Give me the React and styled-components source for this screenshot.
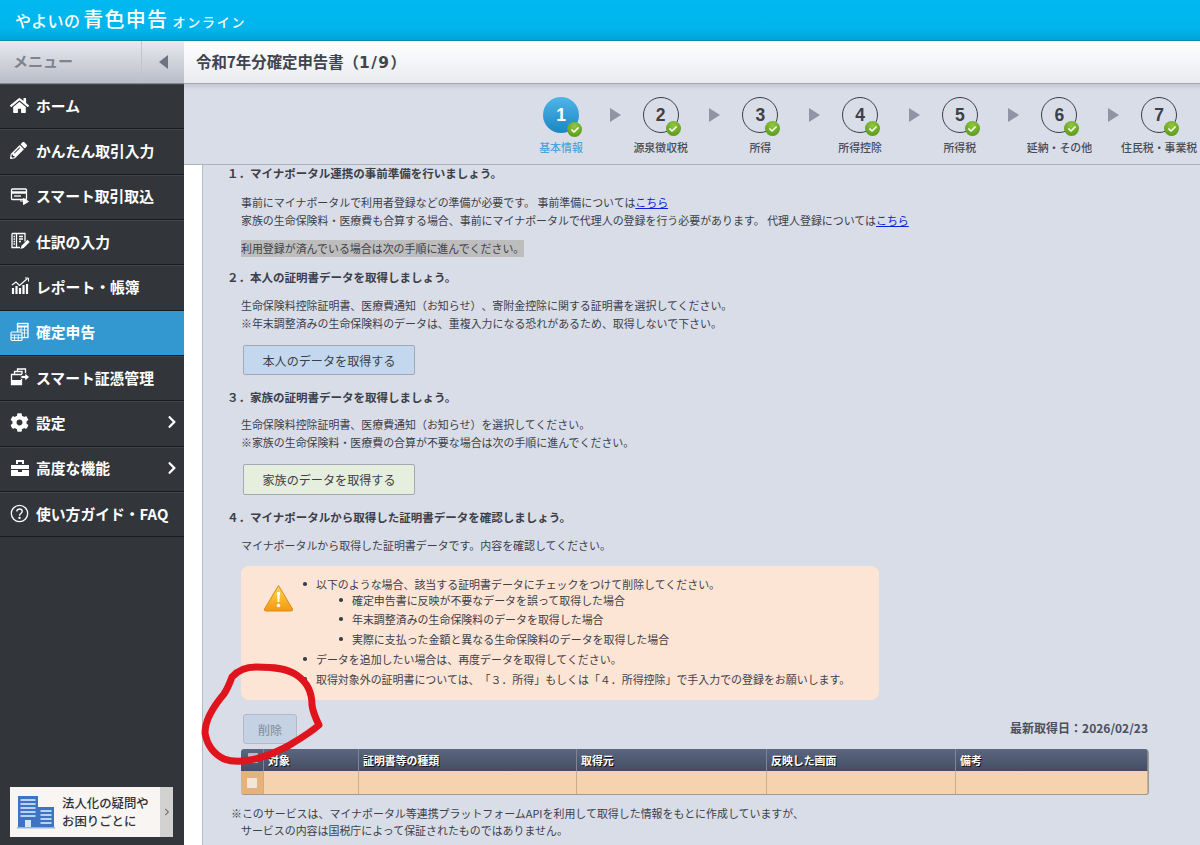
import React from 'react';
import styled, { createGlobalStyle } from 'styled-components';
import { FaHome, FaPencilAlt, FaCog, FaChevronRight, FaCheck } from 'react-icons/fa';

const GlobalStyle = createGlobalStyle`
  html, body {
    margin: 0;
    padding: 0;
    background: #fff;
  }
  body {
    font-family: "Noto Sans CJK JP", "Noto Sans", sans-serif;
    color: #3c4048;
    text-spacing-trim: space-all;
  }
`;

const Page = styled.div`
  position: relative;
  width: 1200px;
  height: 845px;
  overflow: hidden;
  display: flex;
  flex-direction: column;
`;

const Header = styled.header`
  height: 41px;
  flex: none;
  display: flex;
  align-items: baseline;
  padding: 3px 0 0 15px;
  box-sizing: border-box;
  color: #fff;
  background: linear-gradient(#00b9f0, #00b5ec 70%, #00a5d8);
  border-bottom: 1px solid #0a88ad;
`;

const LogoPart = styled.span`
  font-size: ${(p) => p.$size}px;
  font-weight: 500;
  letter-spacing: ${(p) => p.$space}px;
  margin-right: ${(p) => p.$gap || 0}px;
  line-height: 32px;
`;

const Body = styled.div`
  flex: 1;
  display: flex;
  min-height: 0;
`;

const Sidebar = styled.aside`
  width: 184px;
  flex: none;
  display: flex;
  flex-direction: column;
  background: #32363b;
`;

const MenuHead = styled.div`
  height: 43px;
  flex: none;
  display: flex;
  background: linear-gradient(#e8e9ee, #b9bdc9);
  border-bottom: 1px solid #85888e;
  box-sizing: border-box;
`;

const MenuTitle = styled.div`
  flex: 1;
  padding-left: 13px;
  line-height: 40px;
  font-size: 15px;
  font-weight: 700;
  color: #80838c;
  border-right: 1px solid #c2c5cf;
`;

const MenuToggle = styled.div`
  width: 42px;
  display: flex;
  align-items: center;
  justify-content: center;
  &::after {
    content: '';
    border-right: 9px solid #6d7380;
    border-top: 7px solid transparent;
    border-bottom: 7px solid transparent;
  }
`;

const MenuItem = styled.div`
  height: 45.33px;
  flex: none;
  box-sizing: border-box;
  display: flex;
  align-items: center;
  padding: 0 5px 2px 10px;
  color: #fff;
  font-size: 14.8px;
  font-weight: 700;
  background: ${(p) => (p.$active ? '#3398cf' : '#32363b')};
  border-bottom: 1px solid #191b1e;
  box-shadow: inset 0 1px 0 ${(p) => (p.$active ? '#3398cf' : '#42464b')};
`;

const MenuIcon = styled.span`
  width: 26px;
  flex: none;
  display: flex;
  align-items: center;
  svg {
    display: block;
  }
`;

const MenuLabel = styled.span`
  flex: 1;
  white-space: nowrap;
`;

const Banner = styled.div`
  margin: auto 11px 8px 10px;
  height: 50px;
  flex: none;
  display: flex;
  background: #f8f5f2;
  color: #2e3238;
`;

const BannerIcon = styled.div`
  width: 52px;
  flex: none;
  display: flex;
  align-items: center;
  justify-content: center;
`;

const BannerText = styled.div`
  flex: 1;
  font-size: 12.4px;
  font-weight: 500;
  line-height: 18px;
  padding-top: 7px;
  white-space: nowrap;
`;

const BannerArrow = styled.div`
  width: 13px;
  flex: none;
  background: #d2d2d0;
  color: #777;
  display: flex;
  align-items: center;
  justify-content: center;
`;

const Main = styled.main`
  flex: 1;
  min-width: 0;
  display: flex;
  flex-direction: column;
`;

const TitleBar = styled.div`
  height: 43px;
  flex: none;
  box-sizing: border-box;
  padding-left: 12px;
  line-height: 40px;
  font-size: 15.4px;
  font-weight: 700;
  color: #40444d;
  background: linear-gradient(#fff, #e9ebf0);
  border-bottom: 1px solid #a5a8b0;
`;

const TitleCount = styled.span`
  font-family: "DejaVu Sans", sans-serif;
  letter-spacing: 1.5px;
`;

const StepBar = styled.div`
  height: 81px;
  flex: none;
  box-sizing: border-box;
  display: flex;
  padding: 13px 0 0 337px;
  background: linear-gradient(#c5c8d0, #d9dde8 6px);
  border-bottom: 1px solid #adb1b9;
`;

const Step = styled.div`
  width: 80px;
  flex: none;
  display: flex;
  flex-direction: column;
  align-items: center;
`;

const Circle = styled.div`
  position: relative;
  width: 36px;
  height: 36px;
  box-sizing: border-box;
  border-radius: 50%;
  display: flex;
  align-items: center;
  justify-content: center;
  font-family: "Liberation Sans", sans-serif;
  font-size: 17.5px;
  font-weight: 700;
  color: ${(p) => (p.$current ? '#fff' : '#3c4048')};
  background: ${(p) => (p.$current ? 'linear-gradient(#4fb5e8, #1a86c4)' : 'transparent')};
  border: ${(p) => (p.$current ? 'none' : '1.5px solid #3a3e47')};
`;

const Done = styled.span`
  position: absolute;
  right: -3px;
  bottom: -4px;
  width: 15px;
  height: 15px;
  border-radius: 50%;
  display: flex;
  align-items: center;
  justify-content: center;
  color: #fff;
  background: radial-gradient(circle at 50% 30%, #92c83e, #4d8f14);
`;

const StepLabel = styled.div`
  margin-top: 7px;
  font-size: 10.9px;
  line-height: 14px;
  font-weight: 500;
  white-space: nowrap;
  color: ${(p) => (p.$current ? '#4ba3dc' : '#484c55')};
`;

const StepArrow = styled.div`
  width: 19.7px;
  flex: none;
  height: 36px;
  margin-right: -1px;
  display: flex;
  align-items: center;
  justify-content: flex-end;
  &::after {
    content: '';
    border-left: 11px solid #8f95a5;
    border-top: 7px solid transparent;
    border-bottom: 7px solid transparent;
  }
  & + div {
    margin-left: 1px;
  }
`;

const Gutter = styled.div`
  flex: 1;
  min-height: 0;
  padding-left: 18px;
  background: #fff;
  display: flex;
`;

const Panel = styled.div`
  flex: 1;
  min-width: 0;
  box-sizing: border-box;
  padding: 0 52px 0 24px;
  background: #d9dde8;
  border-left: 1px solid #b6bac6;
  overflow: hidden;
`;

const Heading = styled.h3`
  margin: ${(p) => p.$mt || 0}px 0 0;
  font-size: 11.5px;
  line-height: 16px;
  font-weight: 700;
  color: #3c4048;
`;

const Text = styled.p`
  margin: ${(p) => p.$mt || 0}px 0 0 14px;
  font-size: 10.95px;
  line-height: ${(p) => p.$lh || 18}px;
  white-space: nowrap;
`;

const Link = styled.a`
  color: #0a22d8;
  text-decoration: underline;
`;

const Marked = styled.span`
  display: inline-block;
  line-height: 17px;
  background: #bdbdbd;
`;

const DataButton = styled.button`
  display: block;
  width: 172px;
  height: ${(p) => p.$h}px;
  margin: 13px 0 0 16px;
  padding: 0;
  font: inherit;
  font-size: 12.1px;
  color: #3c4048;
  border: 1px solid #a2a8b5;
  border-radius: 2px;
  background: ${(p) => p.$bg};
`;

const Notice = styled.div`
  height: 134px;
  width: 638px;
  margin: 12px 0 0 14px;
  box-sizing: border-box;
  display: flex;
  background: #fde5d5;
  border-radius: 8px;
  font-size: 10.95px;
`;

const NoticeIcon = styled.div`
  width: 61px;
  flex: none;
  padding: 18px 0 0 22px;
  box-sizing: border-box;
`;

const BulletList = styled.ul`
  margin: ${(p) => (p.$nested ? '0' : '10px 0 0')};
  padding: 0 0 0 ${(p) => (p.$nested ? 22 : 0)}px;
  list-style: none;
`;

const Bullet = styled.li`
  position: relative;
  line-height: 20px;
  margin: ${(p) => p.$mt || 0}px 0 0 14px;
  white-space: nowrap;
  &::before {
    content: '';
    position: absolute;
    left: -13px;
    top: 8px;
    width: 3.5px;
    height: 3.5px;
    border-radius: 50%;
    background: #3c4048;
  }
`;

const FirstBullet = styled(Bullet)`
  line-height: 16px;
  &::before {
    top: 6px;
  }
`;

const TableTop = styled.div`
  margin: 14px 0 0 16px;
  height: 30px;
  display: flex;
  justify-content: space-between;
`;

const DeleteButton = styled.button`
  width: 54px;
  height: 30px;
  padding: 0;
  font: inherit;
  font-size: 12px;
  font-weight: 500;
  color: #8b94a8;
  border: 1px solid #b2bac9;
  border-radius: 3px;
  background: #c5d2e3;
`;

const FetchDate = styled.div`
  font-size: 12px;
  line-height: 28px;
  font-weight: 700;
  color: #4a5060;
`;

const Table = styled.div`
  margin: 5px 0 0 14px;
  width: 907px;
  border-radius: 3px;
  overflow: hidden;
  box-shadow: 1px 1px 0 #9e9a94, 0 1px 0 #9e9a94;
`;

const TRow = styled.div`
  display: grid;
  grid-template-columns: 23px 95px 218px 190px 189px 192px;
  height: ${(p) => p.$h}px;
  background: ${(p) => p.$bg};
`;

const HeadCell = styled.div`
  box-sizing: border-box;
  display: flex;
  align-items: center;
  padding-left: 4px;
  font-size: 10.9px;
  font-weight: 700;
  color: #fff;
  text-shadow: 1px 1px 0 #111;
  border-right: 1px solid #7d8699;
`;

const BodyCell = styled.div`
  box-sizing: border-box;
  display: flex;
  align-items: center;
  justify-content: center;
  background: ${(p) => p.$bg || 'transparent'};
  border-right: 1px solid #c9ad8d;
`;

const CheckBox = styled.span`
  width: 10px;
  height: 10px;
  margin: 0 0 ${(p) => p.$mb || 0}px ${(p) => p.$ml || 0}px;
  background: ${(p) => p.$bg};
  border-radius: 1px;
`;

const Note = styled.p`
  margin: 11px 0 0 4px;
  font-size: 10.95px;
  line-height: 17px;
  white-space: nowrap;
`;

const NoteIndent = styled.span`
  display: block;
  padding-left: 10px;
`;

const Scribble = styled.svg`
  position: absolute;
  left: 0;
  top: 0;
  pointer-events: none;
`;

const Icon = ({ children, w = 20, h = 20 }) => (
  <svg width={w} height={h} viewBox="0 0 20 20" fill="none" stroke="currentColor" strokeWidth="1.3">
    {children}
  </svg>
);

const ImportIcon = () => (
  <Icon>
    <rect x="1.5" y="3" width="15" height="10.5" rx="1" />
    <path d="M1.5 6.5h15" strokeWidth="2.5" />
    <path d="M4 10h7" />
    <path d="M10 15h5.5M13.5 12.5l5 3-5 3z" fill="currentColor" strokeWidth="1" />
  </Icon>
);

const JournalIcon = () => (
  <Icon>
    <path d="M2 2.5h13v8M2 2.5v14h8" />
    <path d="M6.5 2.5v14M9 5.5h4M9 8h4M9 10.5h2M3.5 5.5h1.5M3.5 8h1.5M3.5 10.5h1.5M3.5 13h1.5" />
    <path d="M10.5 18l1-3.2 6-6 2.2 2.2-6 6z" fill="currentColor" stroke="none" />
  </Icon>
);

const ChartIcon = () => (
  <Icon>
    <path d="M3 18v-6M6.5 18v-8M10 18v-6M13.5 18V9M17 18V8" strokeWidth="2.2" />
    <path d="M2 9l4-3 3.5 3.5L17.5 2.5" strokeWidth="1.2" />
    <path d="M15 2h3.5v3.5" strokeWidth="1" />
  </Icon>
);

const TaxIcon = () => (
  <Icon>
    <rect x="7.5" y="1.5" width="10.5" height="14" />
    <path d="M7.5 4.5h10.5" strokeWidth="2" />
    <path d="M7.5 8h10.5M7.5 11h10.5M11 5v10M14.5 5v10" strokeWidth="0.8" />
    <rect x="1" y="10" width="11" height="8.5" rx="1" fill="#3398cf" strokeWidth="1.1" />
    <path d="M1 13h11M1 15.8h11M4.6 13v5M8.3 13v5" strokeWidth="0.9" />
  </Icon>
);

const VoucherIcon = () => (
  <Icon>
    <path d="M7.5 4V2h8v5M4.5 7V4.5h7.5V7" />
    <path d="M1.5 7.5h10V17.5h-10z" fill="none" />
    <path d="M1.5 13h10v4.5h-10z" fill="currentColor" stroke="none" />
    <path d="M11 8.5h4V6l4.5 4-4.5 4v-2.5h-4z" fill="currentColor" stroke="#32363b" strokeWidth="0.8" />
  </Icon>
);

const ToolIcon = () => (
  <svg width="20" height="20" viewBox="0 0 20 20" fill="currentColor">
    <path d="M6 2h8v4h-2V4H8v2H6z" />
    <path d="M1 7h18v4H1zM1 12h7v2h4v-2h7v6H1z" />
  </svg>
);

const HelpIcon = () => (
  <svg width="19" height="19" viewBox="0 0 20 20" fill="none" stroke="currentColor" strokeWidth="1.4">
    <circle cx="10" cy="10" r="8.6" />
    <path d="M7.2 8c0-1.7 1.2-2.7 2.9-2.7 1.6 0 2.8 1 2.8 2.4 0 2.3-2.9 2.2-2.9 4.6" />
    <circle cx="10" cy="14.6" r="0.6" fill="currentColor" />
  </svg>
);

const BuildingIcon = () => (
  <svg width="38" height="34" viewBox="0 0 38 34">
    <rect x="1" y="1" width="20" height="31" fill="#3f73c4" />
    <rect x="21" y="12" width="16" height="20" fill="#3f73c4" />
    <rect x="0" y="32" width="38" height="1.5" fill="#8fb3e4" />
    {[4, 8, 12, 16, 20].map((y) => (
      <rect key={y} x="3.5" y={y} width="15" height="2" fill="#b9d2f2" />
    ))}
    {[15, 19, 23, 27].map((y) => (
      <rect key={y} x="23.5" y={y} width="11" height="2" fill="#b9d2f2" />
    ))}
    <rect x="8" y="25" width="6" height="7" fill="#d5e4f7" />
  </svg>
);

const WarningIcon = () => (
  <svg width="31" height="28" viewBox="0 0 31 28">
    <defs>
      <linearGradient id="warn" x1="0" y1="0" x2="0" y2="1">
        <stop offset="0" stopColor="#ffd65c" />
        <stop offset="1" stopColor="#f39a0c" />
      </linearGradient>
    </defs>
    <path d="M15.5 1.5 L29.5 25 Q30 27 28 27 H3 Q1 27 1.5 25 Z" fill="url(#warn)" stroke="#d98a14" strokeWidth="1" strokeLinejoin="round" />
    <path d="M14 8h3l-.6 10h-1.8z" fill="#fff" />
    <circle cx="15.5" cy="21.5" r="1.8" fill="#fff" />
  </svg>
);

const menu = [
  { label: 'ホーム', icon: <FaHome size={19} /> },
  { label: 'かんたん取引入力', icon: <FaPencilAlt size={17} /> },
  { label: 'スマート取引取込', icon: <ImportIcon /> },
  { label: '仕訳の入力', icon: <JournalIcon /> },
  { label: 'レポート・帳簿', icon: <ChartIcon /> },
  { label: '確定申告', icon: <TaxIcon />, active: true },
  { label: 'スマート証憑管理', icon: <VoucherIcon /> },
  { label: '設定', icon: <FaCog size={19} />, more: true },
  { label: '高度な機能', icon: <ToolIcon />, more: true },
  { label: '使い方ガイド・FAQ', icon: <HelpIcon /> },
];

const steps = ['基本情報', '源泉徴収税', '所得', '所得控除', '所得税', '延納・その他', '住民税・事業税'];

const columns = ['', '対象', '証明書等の種類', '取得元', '反映した画面', '備考'];

export default function App() {
  return (
    <Page>
      <GlobalStyle />
      <Header>
        <LogoPart $size={16} $space={0.3} $gap={3}>やよいの</LogoPart>
        <LogoPart $size={20} $space={1.3} $gap={4}>青色申告</LogoPart>
        <LogoPart $size={13} $space={1.8}>オンライン</LogoPart>
      </Header>
      <Body>
        <Sidebar>
          <MenuHead>
            <MenuTitle>メニュー</MenuTitle>
            <MenuToggle />
          </MenuHead>
          {menu.map((item) => (
            <MenuItem key={item.label} $active={item.active}>
              <MenuIcon>{item.icon}</MenuIcon>
              <MenuLabel>{item.label}</MenuLabel>
              {item.more && <FaChevronRight size={14} />}
            </MenuItem>
          ))}
          <Banner>
            <BannerIcon><BuildingIcon /></BannerIcon>
            <BannerText>法人化の疑問や<br />お困りごとに</BannerText>
            <BannerArrow><FaChevronRight size={8} /></BannerArrow>
          </Banner>
        </Sidebar>
        <Main>
          <TitleBar>令和7年分確定申告書（<TitleCount>1/9</TitleCount>）</TitleBar>
          <StepBar>
            {steps.map((label, i) => (
              <React.Fragment key={label}>
                <Step>
                  <Circle $current={i === 0}>
                    {i + 1}
                    <Done><FaCheck size={8} /></Done>
                  </Circle>
                  <StepLabel $current={i === 0}>{label}</StepLabel>
                </Step>
                {i < steps.length - 1 && <StepArrow />}
              </React.Fragment>
            ))}
          </StepBar>
          <Gutter>
            <Panel>
              <Heading>１．マイナポータル連携の事前準備を行いましょう。</Heading>
              <Text $mt={12}>
                事前にマイナポータルで利用者登録などの準備が必要です。 事前準備については<Link>こちら</Link>
                <br />
                家族の生命保険料・医療費も合算する場合、事前にマイナポータルで代理人の登録を行う必要があります。 代理人登録については<Link>こちら</Link>
              </Text>
              <Text $mt={11} $lh={17}><Marked>利用登録が済んでいる場合は次の手順に進んでください。</Marked></Text>
              <Heading $mt={12}>２．本人の証明書データを取得しましょう。</Heading>
              <Text $mt={11}>
                生命保険料控除証明書、医療費通知（お知らせ）、寄附金控除に関する証明書を選択してください。
                <br />
                ※年末調整済みの生命保険料のデータは、重複入力になる恐れがあるため、取得しないで下さい。
              </Text>
              <DataButton $h={30} $bg="#c3d8ee">本人のデータを取得する</DataButton>
              <Heading $mt={14}>３．家族の証明書データを取得しましょう。</Heading>
              <Text $mt={11} $lh={17.5}>
                生命保険料控除証明書、医療費通知（お知らせ）を選択してください。
                <br />
                ※家族の生命保険料・医療費の合算が不要な場合は次の手順に進んでください。
              </Text>
              <DataButton $h={31} $bg="#e6eedd">家族のデータを取得する</DataButton>
              <Heading $mt={14}>４．マイナポータルから取得した証明書データを確認しましょう。</Heading>
              <Text $mt={11}>マイナポータルから取得した証明書データです。内容を確認してください。</Text>
              <Notice>
                <NoticeIcon><WarningIcon /></NoticeIcon>
                <BulletList>
                  <FirstBullet>
                    以下のような場合、該当する証明書データにチェックをつけて削除してください。
                    <BulletList $nested>
                      <FirstBullet>確定申告書に反映が不要なデータを誤って取得した場合</FirstBullet>
                      <Bullet $mt={1}>年末調整済みの生命保険料のデータを取得した場合</Bullet>
                      <Bullet>実際に支払った金額と異なる生命保険料のデータを取得した場合</Bullet>
                    </BulletList>
                  </FirstBullet>
                  <Bullet>データを追加したい場合は、再度データを取得してください。</Bullet>
                  <Bullet>取得対象外の証明書については、「３．所得」もしくは「４．所得控除」で手入力での登録をお願いします。</Bullet>
                </BulletList>
              </Notice>
              <TableTop>
                <DeleteButton>削除</DeleteButton>
                <FetchDate>最新取得日：2026/02/23</FetchDate>
              </TableTop>
              <Table>
                <TRow $h={22} $bg="linear-gradient(#5b6680, #444d63)">
                  {columns.map((name, i) => (
                    <HeadCell key={name || i}>
                      {i === 0 ? <CheckBox $bg="#b8bcc6" $ml={3} $mb={5} /> : name}
                    </HeadCell>
                  ))}
                </TRow>
                <TRow $h={23} $bg="#f5d3ae">
                  {columns.map((name, i) => (
                    <BodyCell key={name || i} $bg={i === 0 ? '#e5b27b' : undefined}>
                      {i === 0 && <CheckBox $bg="#f1e6da" />}
                    </BodyCell>
                  ))}
                </TRow>
              </Table>
              <Note>
                ※このサービスは、マイナポータル等連携プラットフォームAPIを利用して取得した情報をもとに作成していますが、
                <NoteIndent>サービスの内容は国税庁によって保証されたものではありません。</NoteIndent>
              </Note>
            </Panel>
          </Gutter>
        </Main>
      </Body>
      <Scribble width="1200" height="845" viewBox="0 0 1200 845" fill="none">
        <path
          d="M232 677 C238 670 245 667 256 667 C272 667 288 668 298 676 C309 684 312 695 312 705 C313 713 316 719 319 725 C310 733 298 740 288 746 C278 751 268 757 250 760 C240 762 232 762 224 759 C214 754 207 745 205 733 C205 722 212 708 224 694 C228 688 230 682 232 677"
          stroke="#e0141c"
          strokeWidth="7"
          strokeLinecap="round"
          strokeLinejoin="round"
        />
      </Scribble>
    </Page>
  );
}
